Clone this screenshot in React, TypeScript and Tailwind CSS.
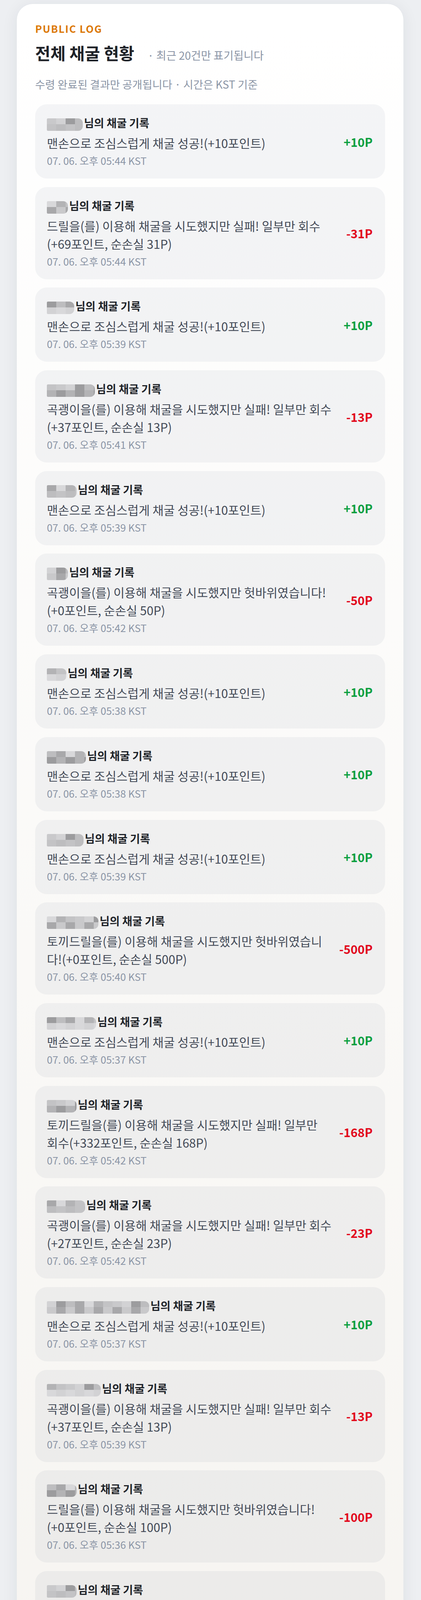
import React from "react";
import { ArrowUp, ArrowDown } from "lucide-react";

type Item = { w: number; lines: string[]; time: string; amt: string };

const HAND = "맨손으로 조심스럽게 채굴 성공!(+10포인트)";

const items: Item[] = [
  { w: 92, lines: [HAND], time: "07. 06. 오후 05:44 KST", amt: "+10P" },
  { w: 54, lines: ["드릴을(를) 이용해 채굴을 시도했지만 실패! 일부만 회수", "(+69포인트, 순손실 31P)"], time: "07. 06. 오후 05:44 KST", amt: "-31P" },
  { w: 70, lines: [HAND], time: "07. 06. 오후 05:39 KST", amt: "+10P" },
  { w: 123, lines: ["곡괭이을(를) 이용해 채굴을 시도했지만 실패! 일부만 회수", "(+37포인트, 순손실 13P)"], time: "07. 06. 오후 05:41 KST", amt: "-13P" },
  { w: 76, lines: [HAND], time: "07. 06. 오후 05:39 KST", amt: "+10P" },
  { w: 54, lines: ["곡괭이을(를) 이용해 채굴을 시도했지만 헛바위였습니다!", "(+0포인트, 순손실 50P)"], time: "07. 06. 오후 05:42 KST", amt: "-50P" },
  { w: 50, lines: [HAND], time: "07. 06. 오후 05:38 KST", amt: "+10P" },
  { w: 100, lines: [HAND], time: "07. 06. 오후 05:38 KST", amt: "+10P" },
  { w: 94, lines: [HAND], time: "07. 06. 오후 05:39 KST", amt: "+10P" },
  { w: 132, lines: ["토끼드릴을(를) 이용해 채굴을 시도했지만 헛바위였습니", "다!(+0포인트, 순손실 500P)"], time: "07. 06. 오후 05:40 KST", amt: "-500P" },
  { w: 126, lines: [HAND], time: "07. 06. 오후 05:37 KST", amt: "+10P" },
  { w: 76, lines: ["토끼드릴을(를) 이용해 채굴을 시도했지만 실패! 일부만", "회수(+332포인트, 순손실 168P)"], time: "07. 06. 오후 05:42 KST", amt: "-168P" },
  { w: 98, lines: ["곡괭이을(를) 이용해 채굴을 시도했지만 실패! 일부만 회수", "(+27포인트, 순손실 23P)"], time: "07. 06. 오후 05:42 KST", amt: "-23P" },
  { w: 262, lines: [HAND], time: "07. 06. 오후 05:37 KST", amt: "+10P" },
  { w: 138, lines: ["곡괭이을(를) 이용해 채굴을 시도했지만 실패! 일부만 회수", "(+37포인트, 순손실 13P)"], time: "07. 06. 오후 05:39 KST", amt: "-13P" },
  { w: 76, lines: ["드릴을(를) 이용해 채굴을 시도했지만 헛바위였습니다!", "(+0포인트, 순손실 100P)"], time: "07. 06. 오후 05:36 KST", amt: "-100P" },
  { w: 76, lines: [HAND], time: "07. 06. 오후 05:40 KST", amt: "+10P" },
  { w: 85, lines: ["토끼드릴을(를) 이용해 채굴을 시도했지만 실패! 일부만", "회수(+312포인트, 순손실 188P)"], time: "07. 06. 오후 05:43 KST", amt: "-188P" },
  { w: 50, lines: [HAND], time: "07. 06. 오후 05:35 KST", amt: "+10P" },
  { w: 132, lines: [HAND], time: "07. 06. 오후 05:42 KST", amt: "+10P" },
];

const SHADES = ["#c9c9cb", "#bdbdbf", "#b3b3b5", "#d2d2d4", "#a8a8aa", "#c3c3c5", "#9c9c9e", "#d8d8da"];

function Mosaic({ w, seed }: { w: number; seed: number }) {
  const cols = Math.ceil(w / 24);
  const rows = [15, 17];
  return (
    <span className="mt-[7px] flex h-[32px] shrink-0 flex-col overflow-hidden rounded-l-[3px] rounded-r-[12px] blur-[0.6px]" style={{ width: w }}>
      {rows.map((h, r) => (
        <span key={r} className="flex shrink-0" style={{ height: h }}>
          {Array.from({ length: cols }).map((_, c) => (
            <span key={c} className="h-full w-[24px] shrink-0" style={{ background: SHADES[(seed * 7 + c * 3 + r * 5 + c * r) % SHADES.length] }} />
          ))}
        </span>
      ))}
    </span>
  );
}

function Row({ item, idx }: { item: Item; idx: number }) {
  const plus = item.amt.startsWith("+");
  return (
    <div className="flex items-center rounded-[30px] bg-[rgba(100,116,139,0.07)] pb-[28px] pl-[30px] pr-[32px] pt-[29px]">
      <div className="min-w-0 flex-1">
        <div className="flex h-[36px] items-start">
          <Mosaic w={item.w} seed={idx} />
          <span className="ml-[3px] whitespace-nowrap text-[28px] font-bold leading-[36px] text-[#1f2329]">님의 채굴 기록</span>
        </div>
        <div className="mt-[11px] text-[31px] leading-[46px] text-[#434a57]">
          {item.lines.map((l, i) => (
            <span key={i} className="block whitespace-nowrap">{l}</span>
          ))}
        </div>
        <div className="mt-[4px] text-[26px] leading-[36px] text-[#8b95a6]">{item.time}</div>
      </div>
      <div className={"ml-[24px] shrink-0 text-right text-[30.5px] font-bold leading-[40px] " + (plus ? "text-[#0a9f3f]" : "text-[#e2061c]")}>{item.amt}</div>
    </div>
  );
}

export default function App() {
  return (
    <div className="relative min-h-[4964px] bg-[#edeff2] pb-[20px] pl-[42px] pr-[44px] pt-[9px] font-['Noto_Sans_CJK_KR','Noto_Sans',sans-serif]">
      <div className="rounded-[42px] border border-[#e3e6ea] bg-gradient-to-b from-white to-[#f5f3ef] px-[47px] pb-[47px] pt-[47px] shadow-[0_6px_40px_rgba(30,41,59,0.07)]">
        <div className="text-[26px] font-bold leading-[32px] tracking-[0.07em] text-[#dc7806]">PUBLIC LOG</div>
        <div className="mt-[20px] flex items-baseline">
          <span className="whitespace-nowrap text-[42.5px] font-bold leading-[52px] text-[#1e2228]">전체 채굴 현황</span>
          <span className="ml-[34px] whitespace-nowrap text-[28px] leading-[40px] text-[#8b95a6]">· 최근 20건만 표기됩니다</span>
        </div>
        <div className="mt-[34px] text-[27.8px] leading-[40px] text-[#8b95a6]">수령 완료된 결과만 공개됩니다 · 시간은 KST 기준</div>
        <div className="mt-[32px] flex flex-col gap-[21.7px]">
          {items.map((it, i) => (
            <Row key={i} item={it} idx={i} />
          ))}
        </div>
      </div>
      <button className="absolute left-[963px] top-[4642px] flex h-[88px] w-[89px] items-center justify-center rounded-[22px] border border-white/10 bg-[#1f232a] shadow-[0_8px_24px_rgba(15,23,42,0.22)]">
        <ArrowUp size={48} strokeWidth={2} color="#ffffff" />
      </button>
      <button className="absolute left-[963px] top-[4744px] flex h-[89px] w-[89px] items-center justify-center rounded-[22px] border border-white/10 bg-[#1f232a] shadow-[0_8px_24px_rgba(15,23,42,0.22)]">
        <ArrowDown size={48} strokeWidth={2} color="#ffffff" />
      </button>
      <div className="absolute left-[1040px] top-[4803px] h-[161px] w-[6px] rounded-t-full bg-[#d7d8dc]" />
    </div>
  );
}
